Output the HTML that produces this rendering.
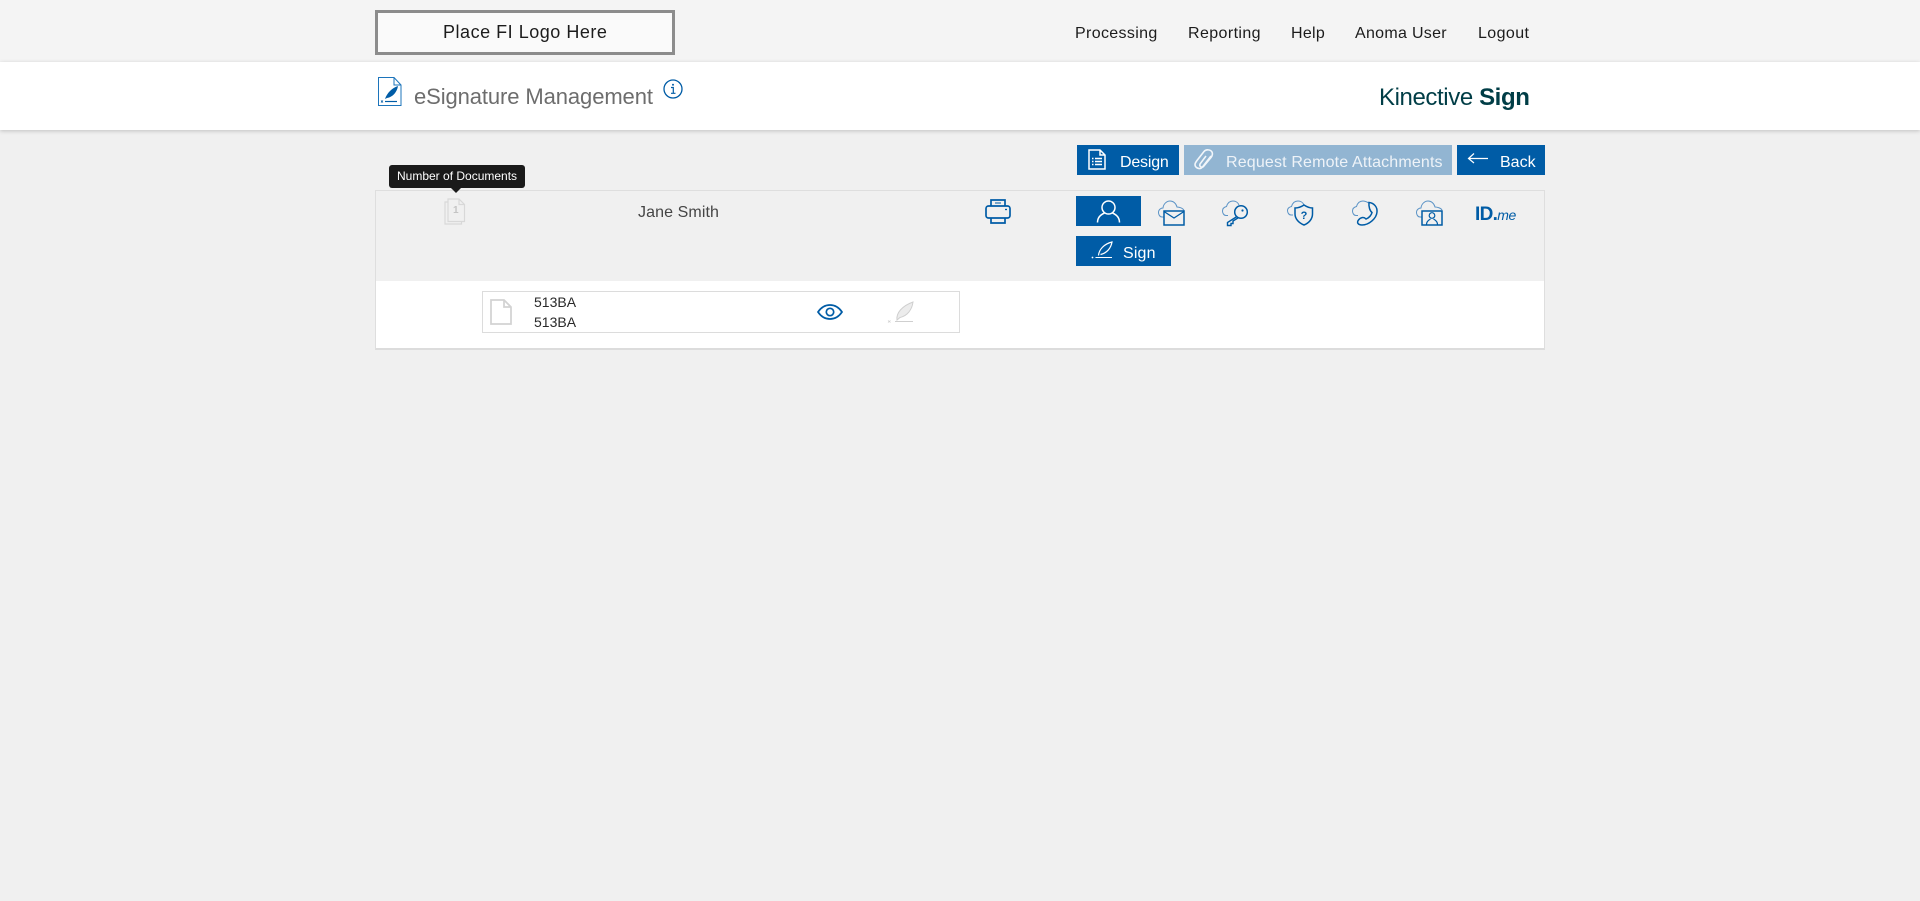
<!DOCTYPE html>
<html lang="en"><head><meta charset="utf-8"><title>eSignature Management</title>
<style>
html,body{margin:0;padding:0;width:1920px;height:901px;overflow:hidden;background:#f0f0f0;font-family:"Liberation Sans",sans-serif}
.a{position:absolute;white-space:nowrap}
.t{position:absolute;white-space:nowrap;line-height:20px}
svg{position:absolute;overflow:visible;fill:none}
.nav{font-size:16px;color:#1c1c1c;top:24px}
.btn{position:absolute;background:#005ca6}
.bt{position:absolute;white-space:nowrap;color:#fff;font-size:16px;line-height:20px}
</style></head><body>
<div class="a" style="left:0;top:0;width:1920px;height:62px;background:#f4f4f4"></div>
<div class="a" style="left:0;top:62px;width:1920px;height:68px;background:#fff;box-shadow:0 1px 4px rgba(0,0,0,.2)"></div>
<div class="a" style="left:375px;top:10px;width:294px;height:39px;border:3px solid #8c8c8c;background:#fafafa"></div>
<div class="t" style="left:443px;top:22px;font-size:18px;color:#1c1c1c;letter-spacing:.52px">Place FI Logo Here</div>
<div class="t nav" style="left:1075px;letter-spacing:.35px">Processing</div>
<div class="t nav" style="left:1188px;letter-spacing:.4px">Reporting</div>
<div class="t nav" style="left:1291px;letter-spacing:.3px">Help</div>
<div class="t nav" style="left:1355px;letter-spacing:.3px">Anoma User</div>
<div class="t nav" style="left:1478px;letter-spacing:.4px">Logout</div>

<svg style="left:378px;top:77px" width="24" height="30" viewBox="0 0 24 30"><path d="M.5.5H16L23 8V28.500H.5Z M16 .5V8H23" stroke="#1c74bb"/><path d="M7 22C9 16 14 11 20 9C19 15 15 20 9 21Z" fill="#005ca6"/><path d="M7 24.500H19" stroke="#005ca6" stroke-width="1.200"/><path d="M3 23.500L5 25.500M5 23.500L3 25.500" stroke="#005ca6" stroke-width=".8"/></svg>
<div class="t" style="left:414px;top:86px;font-size:22px;line-height:22px;color:#6d6d6d;letter-spacing:-.1px">eSignature Management</div>
<svg style="left:663px;top:79px" width="20" height="20" viewBox="0 0 20 20"><circle cx="10" cy="10" r="9" stroke="#005ca6" stroke-width="1.300"/><path d="M8 8.500H10.300V14M8 14.300H12.500" stroke="#005ca6" stroke-width="1.200"/><circle cx="10" cy="5.800" r="1" fill="#005ca6"/></svg>
<div class="t" style="left:1379px;top:87px;font-size:24px;line-height:22px;color:#003d46;letter-spacing:-.4px">Kinective <b>Sign</b></div>

<div class="btn" style="left:1077px;top:145px;width:102px;height:30px"></div>
<svg style="left:1088px;top:149px" width="18" height="22" viewBox="0 0 18 22" stroke="#fff" stroke-width="1.500"><path d="M1 1H12L17 6V20H1Z M12 1V6H17"/><path d="M4 9.500H5.500M7 9.500H14M4 12.500H5.500M7 12.500H14M4 15.500H5.500M7 15.500H14"/></svg>
<div class="bt" style="left:1120px;top:153px;letter-spacing:-.2px">Design</div>

<div class="btn" style="left:1184px;top:145px;width:268px;height:30px;background:#92b5d2"></div>
<svg style="left:1193px;top:148px" width="22" height="24" viewBox="0 0 22 24" stroke="#f2f6fa" stroke-width="1.600"><path d="M18 8L9.500 19C7 22 2 20 2 16.500C2 15 3 14 4 12.500L11 3.500C13 1 17.500 1.500 19 4C20 6 19.500 7.500 18 9.500L10.500 18.500C9 20 6 18.500 7 16L13 8"/></svg>
<div class="bt" style="left:1226px;top:153px;color:#eef3f8;letter-spacing:.16px">Request Remote Attachments</div>

<div class="btn" style="left:1457px;top:145px;width:88px;height:30px"></div>
<svg style="left:1467px;top:152px" width="22" height="14" viewBox="0 0 22 14" stroke="#fff" stroke-width="1.200"><path d="M21 6.500H1.500M7 1.500L1.500 6.500L7 11"/></svg>
<div class="bt" style="left:1500px;top:153px;letter-spacing:0">Back</div>

<div class="a" style="left:375px;top:190px;width:1168px;height:157px;border:1px solid #dedede;border-bottom:2px solid #dcdcdc;background:#fff"></div>
<div class="a" style="left:376px;top:191px;width:1168px;height:90px;background:#f0f0f0"></div>

<div class="a" style="left:389px;top:165px;width:136px;height:23px;background:#1a1a1a;border-radius:3px"></div>
<div class="a" style="left:451px;top:188px;width:0;height:0;border:5px solid transparent;border-top:5px solid #1a1a1a;border-bottom:0"></div>
<div class="t" style="left:397px;top:166px;font-size:12px;color:#fff;letter-spacing:0">Number of Documents</div>

<svg style="left:444px;top:198px" width="22" height="27" viewBox="0 0 22 27" stroke="#d8d8d8" stroke-width="1.200"><path d="M4 1H15L20.500 6.500V23.500H4Z M15 1V6.500H20.500"/><path d="M4 4H1V26H17.500V23.500"/></svg>
<div class="t" style="left:453px;top:201px;font-size:10px;font-weight:bold;color:#c4c4c4">1</div>
<div class="t" style="left:638px;top:203px;font-size:16px;color:#454545;letter-spacing:.1px">Jane Smith</div>

<svg style="left:985px;top:198px" width="26" height="27" viewBox="0 0 26 27" stroke="#005ca6" stroke-width="1.700"><path d="M6 8V2H20V8"/><rect x="1" y="8" width="24" height="12" rx="2.500"/><path d="M6 20V25H20V20"/><path d="M10 5H16" stroke-width="1"/><path d="M20 11.500H22" stroke-width="1.300"/></svg>

<div class="btn" style="left:1076px;top:196px;width:65px;height:30px"></div>
<svg style="left:1096px;top:199px" width="24" height="25" viewBox="0 0 24 25" stroke="#fff" stroke-width="1.500"><circle cx="12.500" cy="8.500" r="6.500"/><path d="M1.500 23.500C1.500 18.500 5 15.500 8.500 14M23.500 23.500C23.500 18.500 20 15.500 16.500 14"/></svg>

<svg style="left:1158px;top:200px" width="27" height="26" viewBox="0 0 27 26"><path d="M6 17H4C1.500 17 .5 14 .5 12.500C.5 9.500 3 8 5 8C5.500 3.500 9 1 12 1C15 1 18 3 19 7C21 7 25 8 26 10.500" stroke="#5b93c6" stroke-width="1"/><rect x="6" y="11" width="20" height="14" fill="#f0f0f0" stroke="#005ca6" stroke-width="1.500"/><path d="M6 11.500L16 18L26 11.500" stroke="#005ca6" stroke-width="1.300"/></svg>

<svg style="left:1222px;top:200px" width="27" height="26" viewBox="0 0 27 26"><path d="M6 15.500H4C1.500 15.500 .5 12.500 .5 11C.5 8 2.500 7 4.500 6.500C5.500 3 8 1 11 1C13.500 1 16 2.500 17 5" stroke="#5b93c6" stroke-width="1"/><path d="M15 16.500L5.500 22.500V25.500H9V23.500H11V21L17.500 17" stroke="#005ca6" stroke-width="1.400" fill="#f0f0f0"/><circle cx="19" cy="12" r="6.300" fill="#f0f0f0" stroke="#005ca6" stroke-width="1.500"/><circle cx="20.500" cy="10.500" r="1.100" fill="#005ca6"/></svg>

<svg style="left:1287px;top:200px" width="27" height="26" viewBox="0 0 27 26"><path d="M6 15H4C1.500 15 .5 12 .5 10.500C.5 8 2.500 7 4.500 6.500C5.500 3 8 1 11 1C13.500 1 16 2.500 17 5" stroke="#5b93c6" stroke-width="1"/><path d="M8 8C11 8 14 7 17 5C20 7 22 8 25.500 8V14C25.500 19 22 23 17 25C12 23 8 19 8 14Z" fill="#f0f0f0" stroke="#005ca6" stroke-width="1.500"/><text x="17" y="19" text-anchor="middle" font-size="11" font-weight="bold" fill="#005ca6" font-family="Liberation Sans">?</text></svg>

<svg style="left:1352px;top:200px" width="27" height="26" viewBox="0 0 27 26"><path d="M6 15.500H4C1.500 15.500 .5 12.500 .5 11C.5 8 2.500 7 4.500 6.500C5.500 3 8 1 11 1C13.500 1 16 2.500 16.500 3" stroke="#5b93c6" stroke-width="1"/><path d="M17 2.500C22 3 25.500 7 25 12C24.500 18.500 17 25 10 25C6 25 4.500 22.500 6.500 20C8.500 17.500 11.500 16.500 14 19C17 18 19.500 15 20 12.500C18 11 16.500 7 17 2.500Z" stroke="#005ca6" stroke-width="1.500" fill="#f0f0f0"/></svg>

<svg style="left:1416px;top:200px" width="27" height="26" viewBox="0 0 27 26"><path d="M6 17H4C1.500 17 .5 14 .5 12.500C.5 9.500 3 8 5 8C5.500 3.500 9 1 12 1C15 1 18 3 19 7C21 7 25 8 26 10" stroke="#5b93c6" stroke-width="1"/><rect x="6" y="11" width="20" height="14" fill="#f0f0f0" stroke="#005ca6" stroke-width="1.500"/><circle cx="16" cy="15.500" r="2.800" stroke="#005ca6" stroke-width="1.200"/><path d="M10.500 24.500C10.500 21 13 20 14.500 19M21.500 24.500C21.500 21 19 20 17.500 19" stroke="#005ca6" stroke-width="1.200"/></svg>

<div class="t" style="left:1475px;top:205px;font-size:19px;font-weight:bold;color:#005ca6;letter-spacing:-.7px">ID.<span style="font:italic 14px 'Liberation Sans',sans-serif;letter-spacing:-.4px">me</span></div>

<div class="btn" style="left:1076px;top:236px;width:95px;height:30px"></div>
<svg style="left:1091px;top:241px" width="22" height="20" viewBox="0 0 22 20"><path d="M7.500 14.500C8 8.500 13 3 21 1C20 7 16 12 9.500 13.500" stroke="#fff" stroke-width="1.200"/><path d="M4.500 16.500H21" stroke="#fff" stroke-width="1"/><circle cx="1.500" cy="16.500" r=".9" fill="#fff"/></svg>
<div class="bt" style="left:1123px;top:244px;letter-spacing:.15px">Sign</div>

<div class="a" style="left:482px;top:291px;width:476px;height:40px;border:1px solid #dcdcdc;background:#fff"></div>
<svg style="left:490px;top:299px" width="22" height="26" viewBox="0 0 22 26" stroke="#d2d2d2" stroke-width="1.700"><path d="M1 1H14L21 8V25H1Z M14 1V8H21"/></svg>
<div class="t" style="left:534px;top:292px;font-size:14px;color:#2a2a2a;letter-spacing:0">513BA</div>
<div class="t" style="left:534px;top:312px;font-size:14px;color:#2a2a2a;letter-spacing:0">513BA</div>
<svg style="left:817px;top:304px" width="26" height="16" viewBox="0 0 26 16" stroke="#005ca6" stroke-width="1.700"><path d="M1 8C4 3.500 8 1 13 1C18 1 22 3.500 25 8C22 12.500 18 15 13 15C8 15 4 12.500 1 8Z"/><circle cx="13" cy="8" r="3.700"/></svg>
<svg style="left:887px;top:301px" width="27" height="22" viewBox="0 0 27 22"><path d="M10 19C9 12 15 5 26 1C25 9 20 15 13 16.500Z" fill="#ececec" stroke="#cfcfcf"/><path d="M8 20.500H26" stroke="#cfcfcf"/><path d="M1 19.500L3.500 21.500M3.500 19.500L1 21.500" stroke="#cfcfcf" stroke-width=".8"/></svg>
</body></html>
